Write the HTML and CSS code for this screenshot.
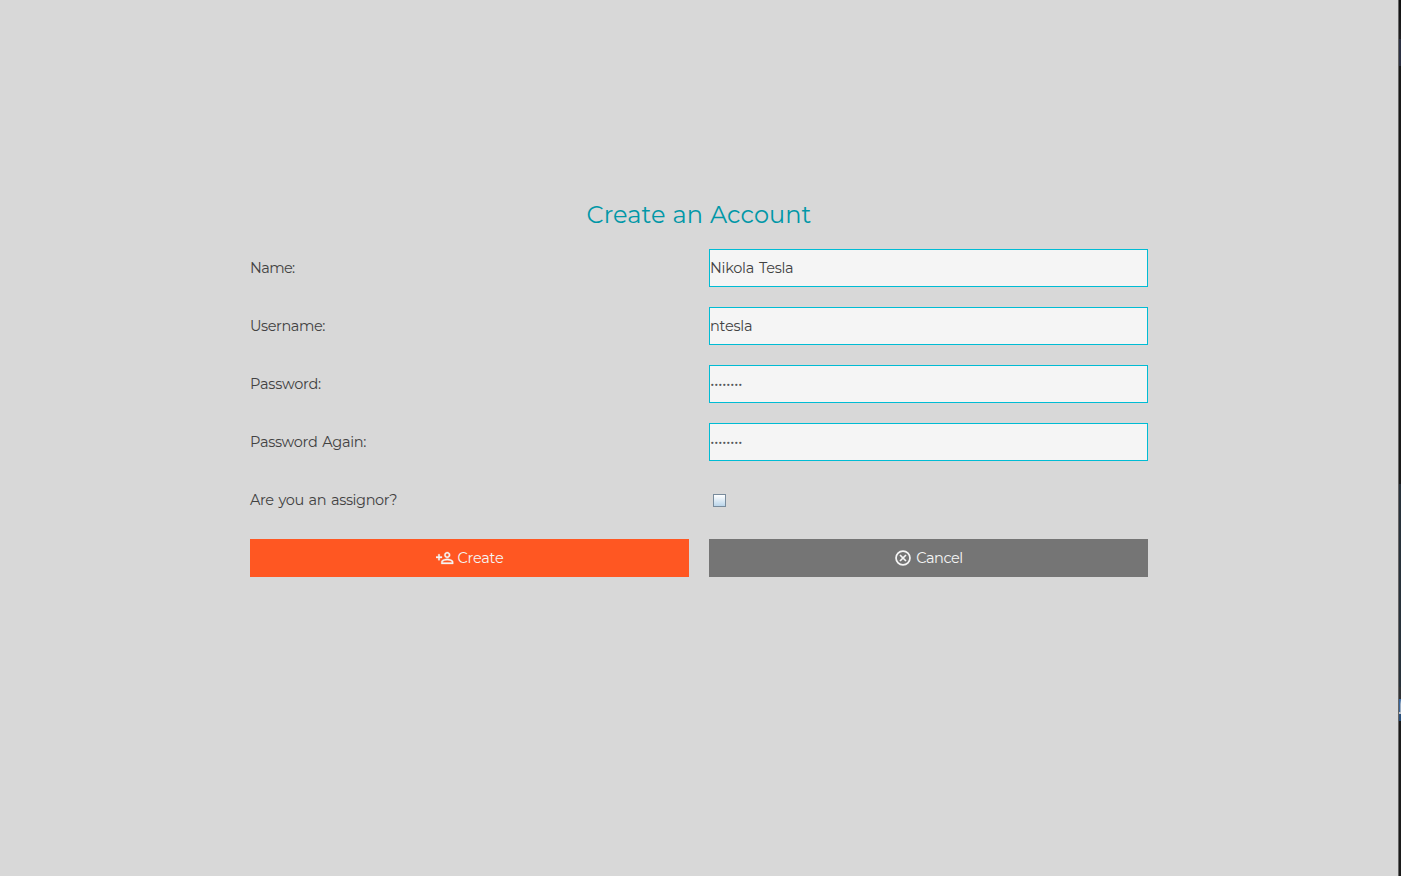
FILE: index.html
```html
<!DOCTYPE html>
<html lang="en">
<head>
<meta charset="utf-8">
<title>Create an Account</title>
<link rel="stylesheet" href="styles.css">
</head>
<body>
<div class="window">
<main class="page">
  <form class="account">
    <h1 class="title"><span>Create an Account</span></h1>
    <label class="label"><span class="t-name">Name:</span></label>
    <div class="field"><span class="t-nikola">Nikola Tesla</span></div>
    <label class="label"><span class="t-user">Username:</span></label>
    <div class="field"><span class="t-ntesla">ntesla</span></div>
    <label class="label"><span class="t-pass">Password:</span></label>
    <div class="field"><span class="dots">••••••••</span></div>
    <label class="label"><span class="t-again">Password Again:</span></label>
    <div class="field"><span class="dots">••••••••</span></div>
    <label class="label"><span class="t-are">Are you an assignor?</span></label>
    <div class="choice"><span class="checkbox"></span></div>
    <button type="button" class="button create">
      <svg class="icon" viewBox="0 0 24 24" fill="currentColor" stroke="currentColor" stroke-width=".4"><path d="M15 12c2.21 0 4-1.79 4-4s-1.79-4-4-4-4 1.79-4 4 1.79 4 4 4zm0-6.1c1.16 0 2.1.94 2.1 2.1s-.94 2.1-2.1 2.1-2.1-.94-2.1-2.1.94-2.1 2.1-2.1zM15 13c-2.67 0-8 1.34-8 4v3h16v-3c0-2.66-5.33-4-8-4zm6.100 5.100H8.900V17c0-.64 3.130-2.100 6.100-2.100s6.100 1.460 6.100 2.100v1.100zM5 15v-3h3v-2H5V7H3v3H0v2h3v3z"/></svg>
      <span class="t-create">Create</span>
    </button>
    <button type="button" class="button cancel">
      <svg class="icon" viewBox="0 0 24 24" fill="none" stroke="currentColor" stroke-width="2.3"><circle cx="12" cy="12" r="9.300"/><path d="M8 8l8 8M16 8l-8 8"/></svg>
      <span class="t-cancel">Cancel</span>
    </button>
  </form>
</main>
<aside class="edge">
  <i class="e1"></i><i class="e2"></i><i class="e3"></i><i class="e4"></i><i class="e5"></i><i class="e6"></i><i class="e7"></i><i class="e8"></i><i class="e9"></i>
</aside>
</div>
</body>
</html>
```
FILE: styles.css
```css
* { box-sizing: border-box; }
body { margin: 0; background: #d8d8d8; color: #424242; font: 400 14.5px/20px Montserrat, Inter, sans-serif; letter-spacing: -0.3px; word-spacing: 1.4px; }
.window { display: flex; height: 876px; overflow: hidden; }
.page { flex: 1; display: flex; justify-content: center; padding-top: 199px; }
.account { width: 898px; height: 378px; display: grid; grid-template-columns: 439px 439px; grid-template-rows: 30px repeat(6, 38px); column-gap: 20px; row-gap: 20px; }
.title { grid-column: 1 / 3; margin: 0; text-align: center; font-size: 24px; line-height: 32px; font-weight: 400; color: #0097a7; letter-spacing: 0.1px; word-spacing: 0.5px; }
.label, .field, .choice { display: flex; align-items: center; }
.field { background: #f5f5f5; border: 1px solid #00bcd4; }
.account span { white-space: nowrap; }
.t-name { letter-spacing: -0.6px; }
.t-user { letter-spacing: -0.4px; }
.t-pass { letter-spacing: -0.22px; }
.t-again { letter-spacing: -0.3px; }
.t-are { letter-spacing: -0.38px; }
.t-nikola { letter-spacing: -0.27px; }
.t-ntesla { letter-spacing: -0.25px; }
.t-create { letter-spacing: -0.25px; }
.t-cancel { letter-spacing: -0.45px; }
.dots { font: 6px/10px "DejaVu Sans", sans-serif; letter-spacing: 0.45px; padding: 1px 0 0 0.5px; -webkit-text-stroke: 0.3px #424242; }
.checkbox { width: 13px; height: 13px; margin: 1px 0 0 4px; border: 1px solid #788b9c; background: linear-gradient(#fff, #bad5ea); }
.button { display: flex; align-items: center; justify-content: center; gap: 4px; border: 0; padding: 0; color: #f5f5f5; font: inherit; }
.create { background: #ff5722; }
.cancel { background: #757575; }
.icon { width: 18px; height: 18px; }
.edge { width: 3px; border-left: 1px solid #656565; display: flex; flex-direction: column; background: #1b1b1b; }
.edge i { display: block; flex: none; }
.e1 { height: 39px; background: linear-gradient(#101010, #202022); }
.e2 { height: 27px; background: #2b3042; }
.e3 { height: 418px; background: #191919; }
.e4 { height: 203px; background: #27313a; }
.e5 { height: 12px; background: #303235; }
.e6 { height: 13px; background: #3b6698; border-top: 5px solid #3668a4; border-right: 1px solid #9caec4; }
.e7 { height: 2px; background: #c2c8d0; }
.e8 { height: 7px; background: #294f7b; }
.e9 { height: 155px; background: #1b1b1b; }
```
